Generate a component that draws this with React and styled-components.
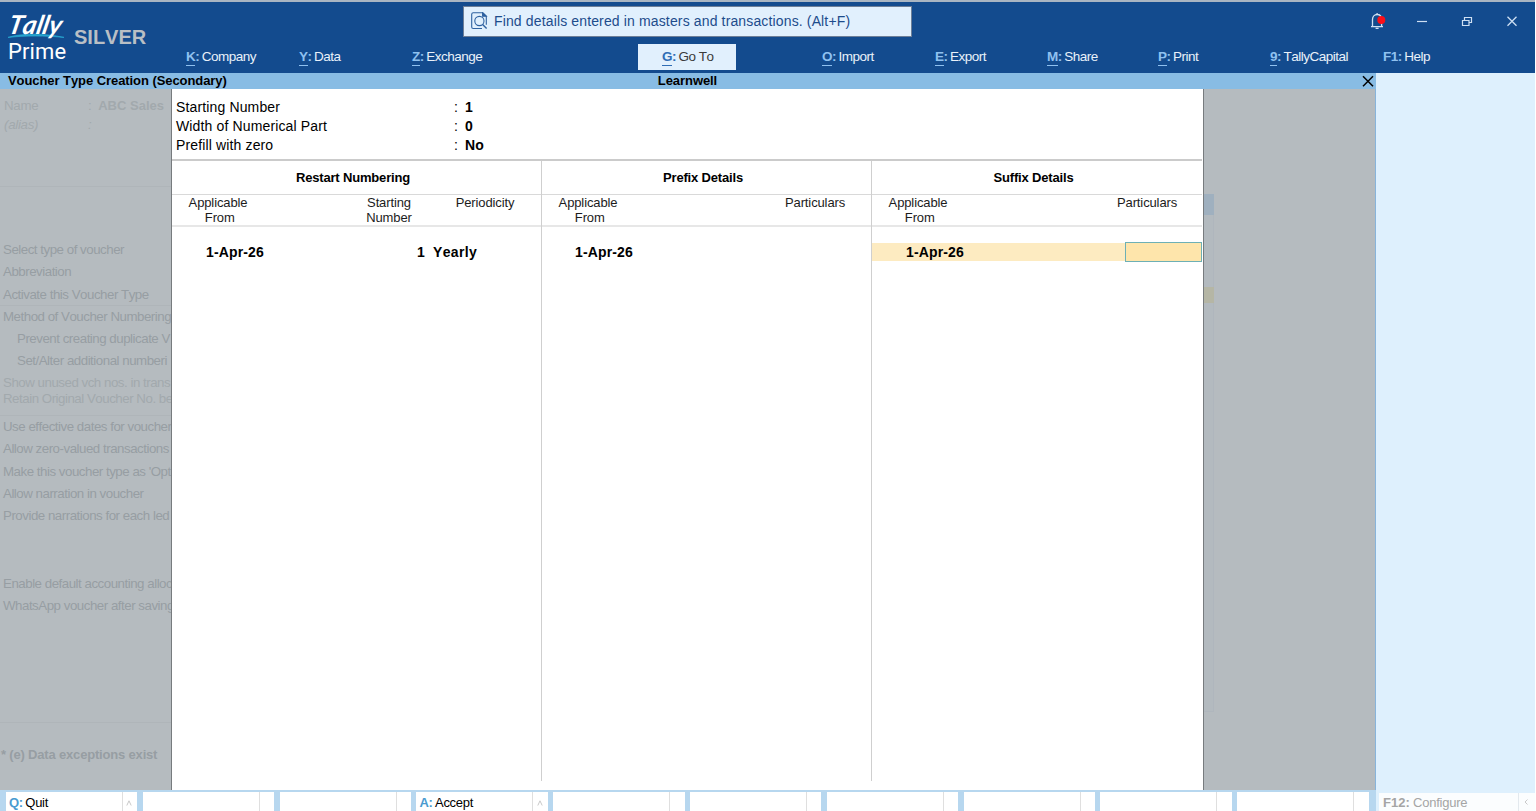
import React from 'react'
import styled, { createGlobalStyle } from 'styled-components'

const GlobalStyle = createGlobalStyle`
  * {
    box-sizing: border-box;
  }
  body {
    margin: 0;
    overflow: hidden;
    font-family: "Liberation Sans", Arial, sans-serif;
    font-size: 14px;
    font-kerning: none;
    color: #000;
  }
`;

const Window = styled.div`
  width: 1536px;
  height: 811px;
  display: flex;
  flex-direction: column;
  background-color: #fff;
`;

// 상단 헤더
const Header = styled.header`
  height: 73px;
  flex: none;
  display: flex;
  margin-right: 1px;
  border-top: 2px solid #a9b5c2;
  background-color: #134b8e;
`;

const Brand = styled.div`
  width: 186px;
  display: flex;
  padding-left: 8px;
`;

const Logo = styled.div`
  width: 66px;
  display: flex;
  flex-direction: column;
  color: #fff;

  svg {
    display: block;
    width: 57px;
    height: 6px;
    margin-top: -6px;
    flex: none;
  }
`;

const Script = styled.span`
  height: 37px;
  padding: 8px 0 0 2px;
  font-family: Lato, "Liberation Sans", sans-serif;
  font-size: 26px;
  font-style: italic;
  font-weight: 700;
  line-height: 28px;
  letter-spacing: 0;
  transform: skewX(-12deg);
`;

const Prime = styled.span`
  font-family: Roboto, "Noto Sans", sans-serif;
  font-size: 22px;
  line-height: 24px;
  letter-spacing: 0.1px;
  margin-top: 1px;
`;

const Edition = styled.span`
  padding-top: 24px;
  font-size: 20px;
  font-weight: bold;
  line-height: 23px;
  letter-spacing: 0;
  color: #b9bfc5;
`;

const HeaderMain = styled.div`
  flex: 1;
  display: flex;
  flex-direction: column;
`;

const TopRow = styled.div`
  height: 40px;
  display: flex;
  padding-left: 277px;
`;

const Search = styled.div`
  width: 449px;
  height: 31px;
  margin-top: 4px;
  padding: 0 0 1px 7px;
  display: flex;
  align-items: center;
  gap: 6px;
  border: 1px solid #6d7f98;
  background-color: #e1f0fd;
  color: #1d4c8c;
  font-size: 14px;
  letter-spacing: 0.14px;
  white-space: nowrap;
`;

const WindowButtons = styled.div`
  display: flex;
  align-items: center;
  margin-left: 443px;
  padding-bottom: 3px;

  svg {
    width: 45px;
    height: 22px;
    flex: none;
  }
`;

const Menu = styled.nav`
  height: 31px;
  display: grid;
  grid-template-columns: 113px 113px 227px 183px 113px 112px 111px 112px 113px 1fr;
`;

const MenuItem = styled.div`
  display: flex;
  align-items: center;
  height: 26px;
  margin-top: 2px;
  padding-bottom: 1px;
  font-size: 13.5px;
  letter-spacing: -0.5px;
  white-space: nowrap;
  color: ${(p) => (p.$active ? '#3b3b3b' : '#e9f1fa')};
  ${(p) => p.$active && `
    width: 98px;
    margin-left: -1px;
    padding-left: 24px;
    background-color: #e1f0fd;
  `}
`;

const Key = styled.b`
  color: ${(p) => p.$color || '#8fc1f0'};
  line-height: 16px;
  padding-top: 1px;
  border-bottom: 1px solid ${(p) => (p.$plain ? 'transparent' : 'currentColor')};
`;

const Colon = styled.b`
  color: ${(p) => p.$color || '#8fc1f0'};
  margin-right: 2.5px;
`;

// 본문
const Body = styled.div`
  flex: 1;
  min-height: 0;
  display: flex;
`;

const Main = styled.main`
  width: 1376px;
  display: flex;
  flex-direction: column;
`;

const SidePanel = styled.aside`
  width: 159px;
  display: flex;
  flex-direction: column;
  justify-content: flex-end;
  background-color: #def0fd;
`;

const TitleBar = styled.div`
  height: 16px;
  flex: none;
  display: grid;
  grid-template-columns: 1fr 120px 1fr;
  align-items: center;
  padding: 0 2px 0 8px;
  font-size: 13px;
  font-weight: bold;
  line-height: 15px;
  letter-spacing: -0.07px;
  background-color: #88bce4;

  span {
    padding-bottom: 1px;
  }
  span:nth-child(2) {
    padding-right: 7px;
    text-align: center;
  }
  svg {
    justify-self: end;
  }
`;

const Workspace = styled.div`
  flex: 1;
  min-height: 0;
  display: flex;
  border-right: 1px solid #88b4da;
  background-color: #b5bbbf;
`;

// 흐리게 보이는 뒤쪽 화면
const Behind = styled.div`
  width: 171px;
  flex: none;
  overflow: hidden;
  padding-top: 7px;
`;

const BehindRow = styled.div`
  height: ${(p) => p.$h}px;
  display: flex;
  align-items: center;
  padding-left: ${(p) => p.$indent || 3}px;
  white-space: nowrap;
  font-size: ${(p) => (p.$bold ? 13 : 13.3)}px;
  letter-spacing: ${(p) => (p.$bold ? -0.18 : -0.48)}px;
  font-weight: ${(p) => (p.$bold ? 'bold' : 'normal')};
  font-style: ${(p) => (p.$italic ? 'italic' : 'normal')};
  color: ${(p) => (p.$faint ? '#a2a9ad' : '#979ea3')};
  border-top: ${(p) => (p.$line ? '1px solid #afb5b9' : 'none')};

  b {
    margin-left: 7px;
    font-size: 13px;
    letter-spacing: 0;
  }
`;

const BehindLabel = styled.span`
  width: 85px;
  padding-left: 1px;
  letter-spacing: -0.3px;
`;

const BehindRight = styled.div`
  width: 10px;
  height: 623px;
  border: 1px solid #afb6bd;
  border-width: 0 1px 1px 0;
  background-color: #b3babf;
  display: flex;
  flex-direction: column;
`;

const Block = styled.div`
  height: ${(p) => p.$h}px;
  margin-right: -1px;
  background-color: ${(p) => p.$color || 'transparent'};
`;

// 번호 설정 창
const Dialog = styled.section`
  width: 1033px;
  flex: none;
  display: flex;
  flex-direction: column;
  border: 1px solid #777b7e;
  border-width: 0 1px;
  background-color: #fff;
`;

const Settings = styled.div`
  height: 70px;
  padding: 9px 0 0 4px;
`;

const Setting = styled.div`
  display: flex;
  height: 19px;
  line-height: 19px;
  letter-spacing: 0.14px;

  span {
    width: 278px;
  }
  b {
    margin-left: 7px;
  }
`;

const Table = styled.div`
  height: 622px;
  display: grid;
  grid-template-columns: 370px 330px 330px;
  border-top: 2px solid #cbcbcb;
  margin-right: 1px;
`;

const Column = styled.div`
  border-right: ${(p) => (p.$last ? 'none' : '1px solid #cfcfcf')};
`;

const ColumnTitle = styled.div`
  height: 34px;
  line-height: 33px;
  text-align: center;
  font-size: 13px;
  font-weight: bold;
  letter-spacing: -0.17px;
  padding-right: 7px;
  border-bottom: 1px solid #d9d9d9;
`;

const SubHeads = styled.div`
  height: 32px;
  display: flex;
  border-bottom: 2px solid #e7e7e7;
  color: #1c1c1c;
  font-size: 13px;
  letter-spacing: -0.12px;
  line-height: 15px;
`;

const SubHead = styled.div`
  width: 60px;
  text-align: center;
  margin-left: ${(p) => p.$gap}px;
`;

const Line = styled.div`
  display: flex;
  height: 20px;
  margin-top: 15px;
  line-height: 20px;
  font-weight: bold;
  letter-spacing: 0.15px;
  ${(p) => p.$selected && 'background: linear-gradient(transparent 1px, #fdebc1 1px, #fdebc1 19px, transparent 19px);'}
`;

const DateCell = styled.span`
  width: 218px;
  padding-left: ${(p) => (p.$first ? 34 : 33)}px;
`;

const NumberCell = styled.span`
  width: 35px;
  text-align: right;
  margin-right: 7px;
`;

const Period = styled.span`
  padding-left: 1px;
  letter-spacing: 0.35px;
`;

const Field = styled.div`
  width: 77px;
  height: 20px;
  margin-left: auto;
  border: 1px solid #6db0b5;
  background-color: #fee5ab;
`;

// 하단 버튼 바
const ButtonBar = styled.div`
  height: 21px;
  flex: none;
  display: grid;
  grid-template-columns: repeat(10, 136.8px);
  padding: 2px 0 0 6px;
  background-color: #b7d7ef;
`;

const BarButton = styled.div`
  display: flex;
  align-items: center;
  padding-left: 3px;
  padding-top: 3px;
  margin-right: 5.4px;
  font-size: 13px;
  line-height: 16px;
  letter-spacing: -0.3px;
  overflow: hidden;
  background: linear-gradient(#dfdfdf, #dfdfdf) 116px 0 / 1px 100% no-repeat #fff;
`;

const Arrow = styled.svg`
  margin-left: auto;
  margin-right: 5px;
`;

const Configure = styled.div`
  height: 18px;
  margin-left: 3px;
  padding: 0 2px 0 4px;
  display: flex;
  align-items: center;
  background: linear-gradient(#e3e9ee, #e3e9ee) 139px 0 / 1px 100% no-repeat #fbfdfe;
  color: #a5a5a5;
  font-size: 13px;
  letter-spacing: -0.25px;
  line-height: 17px;
  overflow: hidden;

  b {
    letter-spacing: 0;
  }
`;

const menus = [
  { key: 'K', label: 'Company' },
  { key: 'Y', label: 'Data' },
  { key: 'Z', label: 'Exchange' },
  { key: 'G', label: 'Go To', active: true },
  { key: 'O', label: 'Import' },
  { key: 'E', label: 'Export' },
  { key: 'M', label: 'Share' },
  { key: 'P', label: 'Print' },
  { key: '9', label: 'TallyCapital' },
  { key: 'F1', label: 'Help', plain: true },
];

const behindRows = [
  { text: 'Select type of voucher', h: 21 },
  { text: 'Abbreviation', h: 23 },
  { text: 'Activate this Voucher Type', h: 22 },
  { text: 'Method of Voucher Numbering', h: 22, line: true },
  { text: 'Prevent creating duplicate V', h: 22, indent: 17 },
  { text: 'Set/Alter additional numberi', h: 23, indent: 17 },
  { text: 'Show unused vch nos. in trans', h: 20, faint: true },
  { text: 'Retain Original Voucher No. be', h: 12, faint: true },
  { text: '', h: 11 },
  { text: 'Use effective dates for voucher', h: 22, line: true },
  { text: 'Allow zero-valued transactions', h: 23 },
  { text: "Make this voucher type as 'Opt", h: 22 },
  { text: 'Allow narration in voucher', h: 22 },
  { text: 'Provide narrations for each led', h: 23 },
  { text: '', h: 45 },
  { text: 'Enable default accounting alloc', h: 22 },
  { text: 'WhatsApp voucher after saving', h: 23 },
];

const bottomButtons = [
  { key: 'Q', label: 'Quit' }, null, null,
  { key: 'A', label: 'Accept' }, null, null, null, null, null, null,
];

const settings = [
  ['Starting Number', '1'],
  ['Width of Numerical Part', '0'],
  ['Prefill with zero', 'No'],
];

function SearchIcon() {
  return (
    <svg width="17" height="18" viewBox="0 0 17 18" fill="none" stroke="#2f62a0" strokeWidth="1.1">
      <path d="M11 16.5H2.2a1.5 1.5 0 0 1-1.5-1.5V2.2A1.5 1.5 0 0 1 2.2.8h9.6l3.5 3.4v8.6" />
      <path d="M11.6.8v3.5h3.7z" fill="#2f62a0" />
      <circle cx="8.4" cy="9" r="4.6" />
      <path d="M11.6 12.4l4 4" strokeWidth="1.4" />
    </svg>
  )
}

export default function App() {
  return (
    <Window>
      <GlobalStyle />

      <Header>
        <Brand>
          <Logo>
            <Script>Tally</Script>
            <svg viewBox="0 0 57 6">
              <path d="M0 4.4C14 .2 36 .2 56 4.4 38 2.5 16 2.6 0 4.4z" fill="#27a5cf" stroke="#27a5cf" strokeWidth="0.8" />
            </svg>
            <Prime>Prime</Prime>
          </Logo>
          <Edition>SILVER</Edition>
        </Brand>
        <HeaderMain>
          <TopRow>
            <Search>
              <SearchIcon />
              Find details entered in masters and transactions. (Alt+F)
            </Search>
            <WindowButtons>
              <svg viewBox="0 0 45 22" fill="none" stroke="#cfe0f3" strokeWidth="1.3">
                <path d="M16 16.7h12M17.5 16.2V9.6c0-3 2-5.1 4.6-5.1 2.7 0 4.5 2.1 4.5 5.1v6.6M22.1 4.3V3M20.6 18.4h3" />
                <circle cx="26.3" cy="10" r="4" fill="#fb0f18" stroke="none" />
              </svg>
              <svg viewBox="0 0 45 22" stroke="#cfe0f3" strokeWidth="1.2">
                <path d="M17 11.5h10" />
              </svg>
              <svg viewBox="0 0 45 22" fill="none" stroke="#cfe0f3" strokeWidth="1.2">
                <path d="M17.5 10.5h6.5v5h-6.5zM19.5 10.5v-3h7v5H24" />
              </svg>
              <svg viewBox="0 0 45 22" stroke="#cfe0f3" strokeWidth="1.3">
                <path d="M17.5 6.8l9 9M26.5 6.8l-9 9" />
              </svg>
            </WindowButtons>
          </TopRow>
          <Menu>
            {menus.map((m) => (
              <MenuItem key={m.key} $active={m.active}>
                <Key $color={m.active && '#2f6db5'} $plain={m.plain}>{m.key}</Key>
                <Colon $color={m.active && '#2f6db5'}>:</Colon>
                {m.label}
              </MenuItem>
            ))}
          </Menu>
        </HeaderMain>
      </Header>

      <Body>
        <Main>
          <TitleBar>
            <span>Voucher Type Creation (Secondary)</span>
            <span>Learnwell</span>
            <svg width="12" height="12" viewBox="0 0 12 12" stroke="#000" strokeWidth="1.5">
              <path d="M1 1.2l10 10M11 1.2l-10 10" />
            </svg>
          </TitleBar>

          <Workspace>
            {/* 뒤쪽 화면 왼쪽 */}
            <Behind>
              <BehindRow $h={19} $faint>
                <BehindLabel>Name</BehindLabel>:<b>ABC Sales</b>
              </BehindRow>
              <BehindRow $h={19} $faint $italic>
                <BehindLabel>(alias)</BehindLabel>:
              </BehindRow>
              <BehindRow $h={52} />
              <BehindRow $h={53} $line />
              {behindRows.map((r, index) => (
                <BehindRow key={index} $h={r.h} $indent={r.indent} $line={r.line} $faint={r.faint}>
                  {r.text}
                </BehindRow>
              ))}
              <BehindRow $h={105} />
              <BehindRow $h={64} $bold $line $indent={1}>* (e) Data exceptions exist</BehindRow>
            </Behind>

            <Dialog>
              <Settings>
                {settings.map(([label, value]) => (
                  <Setting key={label}>
                    <span>{label}</span>:<b>{value}</b>
                  </Setting>
                ))}
              </Settings>

              <Table>
                <Column>
                  <ColumnTitle>Restart Numbering</ColumnTitle>
                  <SubHeads>
                    <SubHead $gap={16}>Applicable<br />&nbsp;From</SubHead>
                    <SubHead $gap={111}>Starting<br />Number</SubHead>
                    <SubHead $gap={36}>Periodicity</SubHead>
                  </SubHeads>
                  <Line>
                    <DateCell $first>1-Apr-26</DateCell>
                    <NumberCell>1</NumberCell>
                    <Period>Yearly</Period>
                  </Line>
                </Column>
                <Column>
                  <ColumnTitle>Prefix Details</ColumnTitle>
                  <SubHeads>
                    <SubHead $gap={16}>Applicable<br />&nbsp;From</SubHead>
                    <SubHead $gap={167}>Particulars</SubHead>
                  </SubHeads>
                  <Line>
                    <DateCell>1-Apr-26</DateCell>
                  </Line>
                </Column>
                <Column $last>
                  <ColumnTitle>Suffix Details</ColumnTitle>
                  <SubHeads>
                    <SubHead $gap={16}>Applicable<br />&nbsp;From</SubHead>
                    <SubHead $gap={169}>Particulars</SubHead>
                  </SubHeads>
                  <Line $selected>
                    <DateCell $first>1-Apr-26</DateCell>
                    <Field />
                  </Line>
                </Column>
              </Table>
            </Dialog>

            {/* 뒤쪽 화면 오른쪽 */}
            <BehindRight>
              <Block $h={105} $color="#b5bbbf" />
              <Block $h={21} $color="#9fb0bf" />
              <Block $h={72} />
              <Block $h={16} $color="#b5b6a5" />
            </BehindRight>
          </Workspace>

          {/* 하단 버튼 바 */}
          <ButtonBar>
            {bottomButtons.map((b, index) => (
              <BarButton key={index}>
                {b && (
                  <>
                    <Key $color="#4a9bd0">{b.key}</Key>
                    <Colon $color="#4a9bd0">:</Colon>
                    {b.label}
                    <Arrow width="6" height="6" viewBox="0 0 6 6" fill="none" stroke="#c9c9c9">
                      <path d="M.8 5.5L3 .8l2.2 4.7" />
                    </Arrow>
                  </>
                )}
              </BarButton>
            ))}
          </ButtonBar>
        </Main>

        <SidePanel>
          <Configure>
            <b>F12:</b>&nbsp;Configure
            <Arrow width="4" height="6" viewBox="0 0 4 6" fill="none" stroke="#c9c9c9">
              <path d="M3.5.5L1 3l2.5 2.5" />
            </Arrow>
          </Configure>
        </SidePanel>
      </Body>
    </Window>
  )
}
